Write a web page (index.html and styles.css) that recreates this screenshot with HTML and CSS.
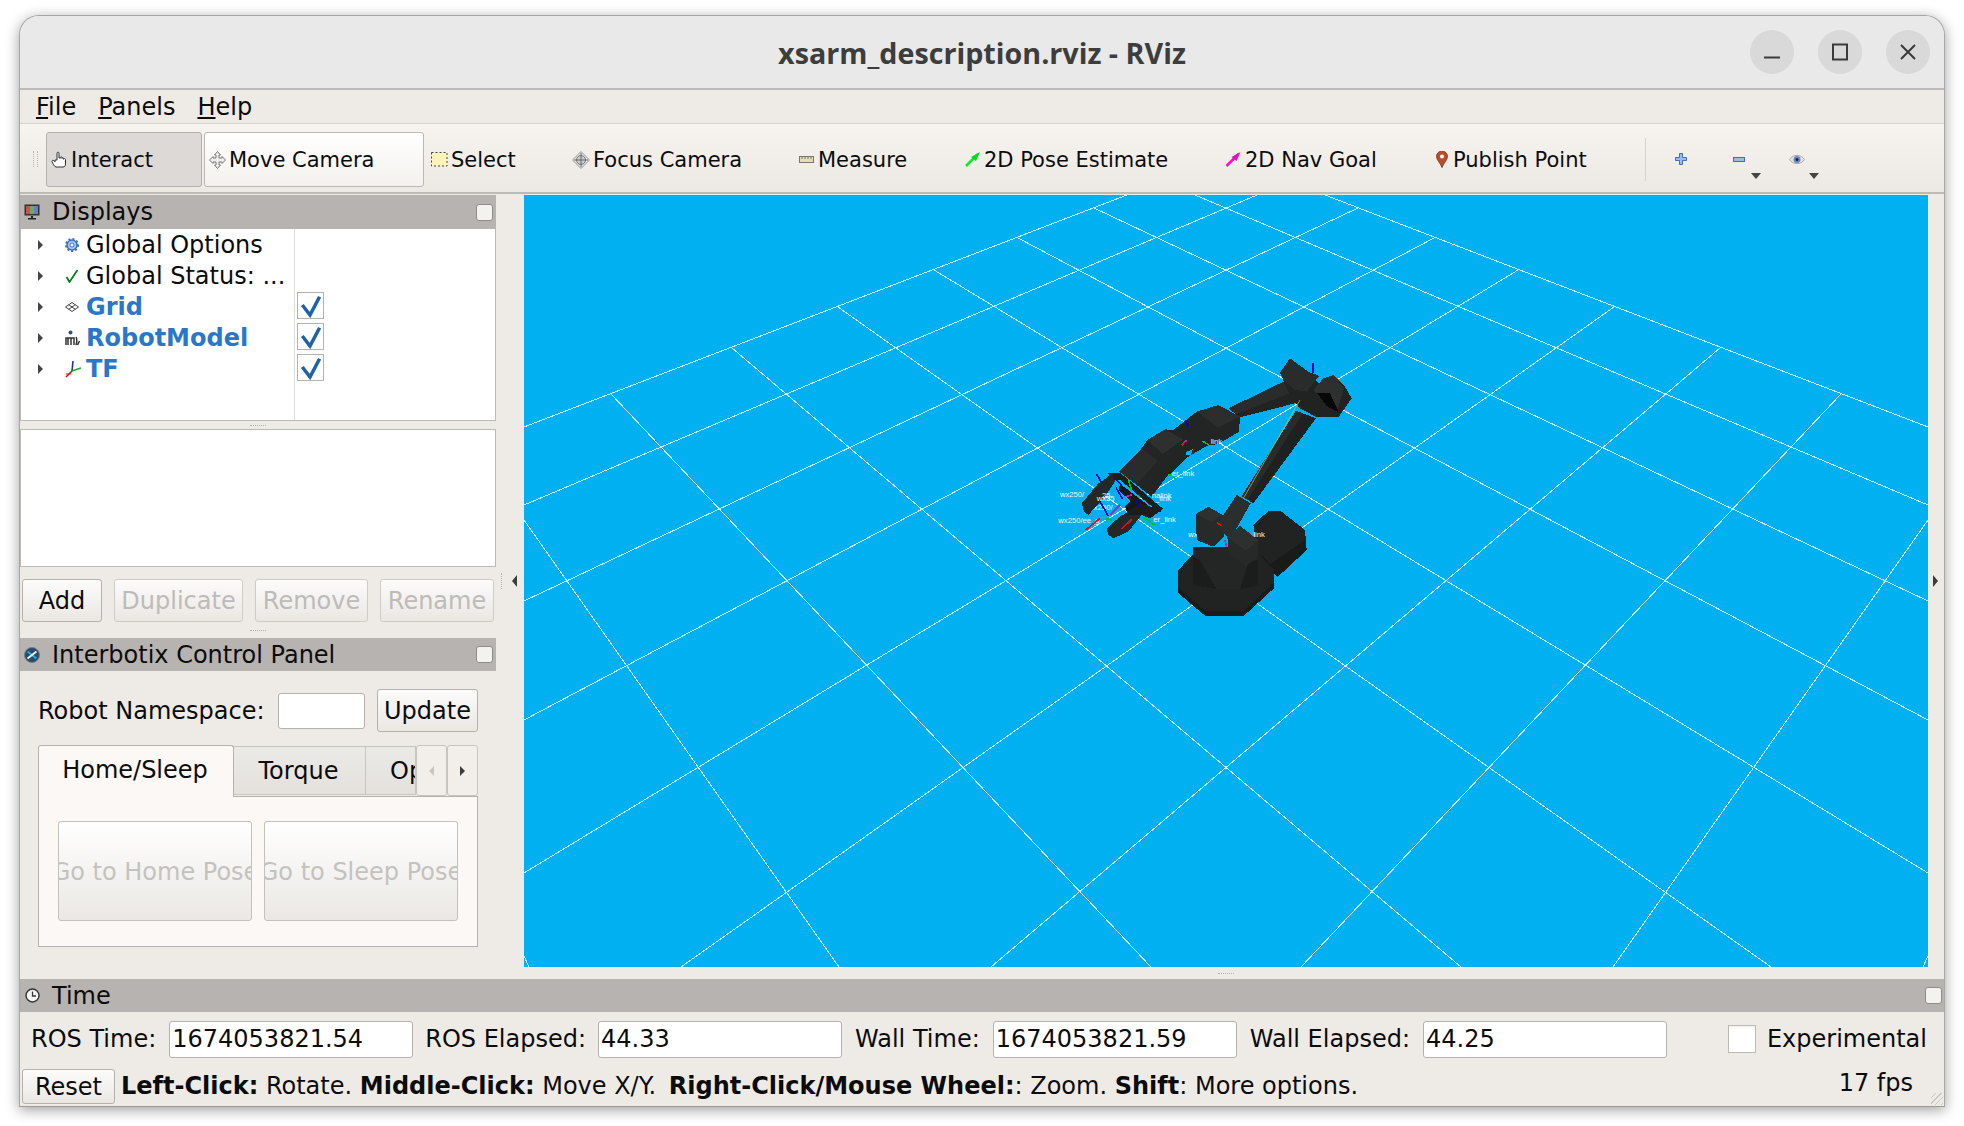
FILE: index.html
```html
<!DOCTYPE html>
<html lang="en">
<head>
<meta charset="utf-8">
<title>xsarm_description.rviz - RViz</title>
<link rel="stylesheet" href="styles.css">
</head>
<body>
<div class="window">
  <header class="titlebar">
    <span></span>
    <h1 class="title">xsarm_description.rviz - RViz</h1>
    <div class="winbtns">
      <div class="winbtn"><svg width="20" height="20" viewBox="0 0 20 20"><path d="M2 15.5H18" class="wg"/></svg></div>
      <div class="winbtn"><svg width="20" height="20" viewBox="0 0 20 20"><path d="M3 2.500H17V17.500H3Z" class="wg"/></svg></div>
      <div class="winbtn"><svg width="20" height="20" viewBox="0 0 20 20"><path d="M3 3L17 17M17 3L3 17" class="wg"/></svg></div>
    </div>
  </header>
  <nav class="menubar">
    <span><u>F</u>ile</span><span><u>P</u>anels</span><span><u>H</u>elp</span>
  </nav>
  <div class="toolbar">
    <div class="grip"></div>
    <div class="tool active">
      <svg width="17" height="17" viewBox="0 0 17 17"><path d="M6 9V2.200C6 .8 8 .8 8 2.200V7H9.500V6.500C9.500 5.500 11 5.500 11 6.500V7.500C11 6.500 12.500 6.500 12.500 7.500V8.200C12.500 7.300 14.500 7.300 14.500 8.500V13C14.500 15 13.500 16 12 16H5C3.500 16 1.500 12 1 10.500C.7 9.500 2 8.800 3 9.800L4 11V9Z" fill="#fff" stroke="#333" stroke-width="1"/></svg>
      <span>Interact</span>
    </div>
    <div class="tool raised">
      <svg width="17" height="18" viewBox="0 0 17 18"><path d="M8.500 .5L11.500 4H10V7H13V5.500L16.500 9L13 12.500V11H10V14H11.500L8.500 17.500L5.500 14H7V11H4V12.500L.5 9L4 5.500V7H7V4H5.500Z" fill="#eeeeec" stroke="#777" stroke-width="1"/></svg>
      <span>Move Camera</span>
    </div>
    <div class="tool">
      <svg width="17" height="15" viewBox="0 0 17 15"><rect x=".5" y=".5" width="15.500" height="13.500" fill="#fbf3b8" stroke="#444" stroke-dasharray="2 2"/></svg>
      <span>Select</span>
    </div>
    <div class="tool">
      <svg width="18" height="18" viewBox="0 0 18 18"><path d="M9 .5L17.500 9L9 17.500L.5 9Z" fill="#e4e4e2" stroke="#999"/><circle cx="9" cy="9" r="4.500" fill="#ccc" stroke="#777"/><path d="M9 2V16M2 9H16" stroke="#666" stroke-width="1"/></svg>
      <span>Focus Camera</span>
    </div>
    <div class="tool wide">
      <svg width="15" height="7" viewBox="0 0 15 7"><rect x=".5" y=".5" width="14" height="6" fill="#e6dcae" stroke="#777"/><path d="M3 1V3M6 1V3M9 1V3M12 1V3" stroke="#777"/></svg>
      <span>Measure</span>
    </div>
    <div class="tool wide">
      <svg width="15" height="15" viewBox="0 0 15 15"><path d="M1 14L13 2" stroke="#00ee22" stroke-width="2.500"/><path d="M15 0L11 9L6 5Z" fill="#00dd22"/></svg>
      <span>2D Pose Estimate</span>
    </div>
    <div class="tool wide">
      <svg width="16" height="15" viewBox="0 0 15 15"><path d="M1 14L13 2" stroke="#f010d8" stroke-width="2.500"/><path d="M15 0L11 9L6 5Z" fill="#e010c8"/></svg>
      <span>2D Nav Goal</span>
    </div>
    <div class="tool pin">
      <svg width="12" height="17" viewBox="0 0 12 17"><path d="M6 16.500C4.500 12 .5 9 .5 5.500A5.500 5.500 0 0 1 11.500 5.500C11.500 9 7.500 12 6 16.500Z" fill="#bf4c2a" stroke="#7a4a2a"/><circle cx="6" cy="5.500" r="2" fill="#fff"/></svg>
      <span>Publish Point</span>
    </div>
    <div class="tool-sep"></div>
    <svg class="tb-plus" width="12" height="12" viewBox="0 0 12 12"><path d="M4.500 .5H7.500V4.500H11.500V7.500H7.500V11.500H4.500V7.500H.5V4.500H4.500Z" fill="#9cbce6" stroke="#3f6fb5"/></svg>
    <svg class="tb-minus" width="12" height="5" viewBox="0 0 12 5"><rect x=".5" y=".5" width="11" height="4" fill="#9cbce6" stroke="#3f6fb5"/></svg>
    <span class="drop drop-a"></span>
    <svg class="tb-eye" width="16" height="11" viewBox="0 0 16 11"><path d="M.5 5.500C4 0 12 0 15.500 5.500C12 11 4 11 .5 5.500Z" fill="#e4e4e4" stroke="#aaa"/><circle cx="8" cy="5.500" r="3.500" fill="#6f86c4"/><circle cx="8" cy="5.500" r="1.500" fill="#1a2340"/></svg>
    <span class="drop drop-b"></span>
  </div>

  <div class="main">
    <aside class="leftdock">
      <div class="dock-title">
        <svg width="16" height="16" viewBox="0 0 16 16"><rect x=".5" y=".5" width="15" height="11" fill="#333"/><rect x="2" y="2" width="4" height="8" fill="#c2554f"/><rect x="6" y="2" width="4" height="8" fill="#6fa860"/><rect x="10" y="2" width="4" height="8" fill="#6a7fc0"/><path d="M7 12H9V14H12V15.500H4V14H7Z" fill="#222"/></svg>
        <span class="dock-name">Displays</span>
        <span class="float-box"></span>
      </div>
      <div class="tree">
        <div class="tree-row">
          <span class="twisty"></span>
          <svg class="ticon" width="14" height="14" viewBox="0 0 14 14"><circle cx="7" cy="7" r="5" fill="#a9c6ee" stroke="#3a6fc4" stroke-width="1.500"/><circle cx="7" cy="7" r="6" fill="none" stroke="#3a6fc4" stroke-width="2" stroke-dasharray="2 2"/><circle cx="7" cy="7" r="2" fill="#fff" stroke="#3a6fc4"/></svg>
          <span class="tname">Global Options</span>
        </div>
        <div class="tree-row">
          <span class="twisty"></span>
          <svg class="ticon" width="14" height="14" viewBox="0 0 14 14"><path d="M1.500 8L4.500 13L12.500 1" fill="none" stroke="#0b7a1e" stroke-width="1.800"/></svg>
          <span class="tname">Global Status: ...</span>
        </div>
        <div class="tree-row">
          <span class="twisty"></span>
          <svg class="ticon" width="14" height="10" viewBox="0 0 14 10"><path d="M7 .5L13.500 5L7 9.500L.5 5ZM3.700 2.700L10.300 7.300M10.300 2.700L3.700 7.300" fill="none" stroke="#444" stroke-width="1"/></svg>
          <span class="tname on">Grid</span>
          <span class="tcheck"><svg width="26" height="26" viewBox="0 0 26 26"><path d="M4.300 12L12 22L21.600 3.700" class="chk"/></svg></span>
        </div>
        <div class="tree-row">
          <span class="twisty"></span>
          <svg class="ticon" width="16" height="16" viewBox="0 0 16 16"><circle cx="5.500" cy="2.500" r="2" fill="#33507a"/><path d="M1 15V8H9V15M3 8V15M6 8V15M11 15C12 12 12 9 11 7M14.500 11L12.500 15" fill="none" stroke="#333" stroke-width="1.500"/></svg>
          <span class="tname on">RobotModel</span>
          <span class="tcheck"><svg width="26" height="26" viewBox="0 0 26 26"><path d="M4.300 12L12 22L21.600 3.700" class="chk"/></svg></span>
        </div>
        <div class="tree-row">
          <span class="twisty"></span>
          <svg class="ticon" width="16" height="18" viewBox="0 0 16 18"><path d="M7 11L8 1" stroke="#1a2ad0" stroke-width="1.600"/><path d="M7 11L16 8" stroke="#11aa22" stroke-width="1.400"/><path d="M7 11L1 17" stroke="#dd1111" stroke-width="1.600"/><path d="M1 14H6" stroke="#dd1111"/></svg>
          <span class="tname on">TF</span>
          <span class="tcheck"><svg width="26" height="26" viewBox="0 0 26 26"><path d="M4.300 12L12 22L21.600 3.700" class="chk"/></svg></span>
        </div>
        <div class="tree-rule"></div>
      </div>
      <div class="split-h split-tree"><i></i></div>
      <div class="desc"></div>
      <div class="btn-row">
        <button class="btn b-add">Add</button>
        <button class="btn off b-dup">Duplicate</button>
        <button class="btn off b-rem">Remove</button>
        <button class="btn off b-ren">Rename</button>
      </div>
      <div class="split-h split-panel"><i></i></div>
      <div class="dock-title short">
        <svg width="16" height="16" viewBox="0 0 16 16"><circle cx="8" cy="8" r="7.500" fill="#2c4a66" stroke="#6c7f90"/><path d="M3.500 4.500L12.500 11.500" stroke="#22a7e0" stroke-width="2"/><path d="M12.500 4.500L3.500 11.500" stroke="#e6eef4" stroke-width="2"/></svg>
        <span class="dock-name">Interbotix Control Panel</span>
        <span class="float-box"></span>
      </div>
      <div class="ns-row">
        <span class="ns-label">Robot Namespace:</span>
        <span class="field ns-field"></span>
        <button class="btn b-upd">Update</button>
      </div>
      <div class="tabs">
        <div class="tabbar">
          <div class="tab sel">Home/Sleep</div>
          <div class="tab t-torque">Torque</div>
          <div class="tab t-op">Op</div>
          <div class="tabscroll dim"><i class="arrow-l"></i></div>
          <div class="tabscroll"><i class="arrow-r"></i></div>
        </div>
        <div class="pane">
          <div class="bigbtn"><span>Go to Home Pose</span></div>
          <div class="bigbtn"><span>Go to Sleep Pose</span></div>
        </div>
      </div>
    </aside>

    <div class="strip-left"><i class="vdots"></i><i class="arrow-l dark"></i></div>

    <div class="view-col">
      <div class="viewport">
        <svg class="scene" width="1404" height="772" viewBox="524 195 1404 772">
          <g class="gridlines">
            <g id="fam">
              <path d="M524 427L1127 195"/>
              <path d="M524 505L1257 195"/>
              <path d="M524 601L1358 208"/>
              <path d="M524 720L1434 238"/>
              <path d="M524 873L1518 270"/>
              <path d="M681 967L1614 307"/>
              <path d="M991 967L1720 348"/>
              <path d="M1301 967L1841 394"/>
              <path d="M1613 967L1928 520"/>
              <path d="M1923 967L1928 956"/>
            </g>
            <use href="#fam" transform="matrix(-1 0 0 1 2452 0)"/>
          </g>
          <g transform="translate(1040 340) scale(.33333)">
            <g class="labels">
              <text x="60" y="472">wx250/</text>
              <text x="55" y="548">wx250/ee_g</text>
              <text x="145" y="510">wx250/</text>
              <text x="445" y="592">wx250/up</text>
            </g>
            <g class="robot">
              <polygon points="640,555 685,513 722,513 795,570 800,630 712,712 690,690 655,650" fill="#212222"/>
              <polygon points="660,640 690,672 795,600 800,630 712,712 690,690" fill="#191a1a"/>
              <polygon points="415,690 460,642 655,642 702,690 702,745 640,800 612,827 495,827 415,760" fill="#212222"/>
              <polygon points="415,742 495,812 612,812 702,728 702,745 612,827 495,827 415,760" fill="#191a1a"/>
              <polygon points="460,620 655,620 655,735 600,748 520,748 460,735" fill="#242525"/>
              <polygon points="480,660 530,748 460,735 460,650" fill="#1b1c1c"/>
              <polygon points="625,665 655,660 655,735 600,748" fill="#1b1c1c"/>
              <polygon points="468,522 505,500 548,525 552,590 520,620 470,600" fill="#282929"/>
              <polygon points="468,522 505,500 548,525 515,545" fill="#2f3030"/>
              <polygon points="605,468 768,212 828,235 640,490" fill="#1f2020"/>
              <polygon points="605,468 768,212 788,220 622,480" fill="#2a2b2b"/>
              <polygon points="530,555 590,465 632,490 570,600" fill="#2c2d2d"/>
              <polygon points="562,590 600,558 655,600 655,650 618,678 566,640" fill="#272828"/>
              <polygon points="562,590 600,558 655,600 618,632" fill="#2e2f2f"/>
              <polygon points="730,120 825,120 850,140 880,105 915,140 935,175 895,232 830,232 780,205 745,165" fill="#212222"/>
              <polygon points="720,98 750,55 805,95 838,108 800,155 765,150 730,120" fill="#2a2b2b"/>
              <polygon points="820,150 850,115 880,105 912,145 890,215 860,190" fill="#2e2f2f"/>
              <polygon points="832,160 870,160 897,218 860,198" fill="#080808"/>
              <polygon points="565,205 730,125 765,190 600,232" fill="#222323"/>
              <polygon points="565,205 730,125 748,160 590,222" fill="#2a2b2b"/>
              <polygon points="238,395 305,325 322,300 375,268 400,270 470,215 535,195 600,230 597,275 535,312 500,318 445,350 400,395 380,410 335,470" fill="#232424"/>
              <polygon points="470,215 535,195 600,230 535,262" fill="#2c2d2d"/>
              <polygon points="322,300 375,268 430,298 368,342" fill="#2e2f2f"/>
              <polygon points="238,395 305,325 352,362 290,435" fill="#2a2b2b"/>
              <polygon points="205,400 240,398 368,505 360,518 330,495 240,420 215,418" fill="#1c1d1d"/>
              <polygon points="240,432 262,448 330,500 300,490 262,520 255,500 272,482 236,452" fill="#161717"/>
              <polygon points="250,525 300,490 345,505 365,510 330,535 305,525" fill="#1c1d1d"/>
              <polygon points="125,490 175,430 205,410 215,400 225,425 195,470 145,525 132,515" fill="#262727"/>
              <polygon points="200,565 245,525 305,525 265,575 220,595 205,585" fill="#262727"/>
              <polygon points="440,335 458,328 452,345 438,345" fill="#00b0f0"/>
            </g>
            <path d="M780 180L612 472" class="yline"/>
            <g class="axes">
              <path d="M820 70L818 100M437 240L445 262M170 403L185 428M228 418L245 435M228 443L248 478M287 480L300 505M180 485L205 528" stroke="#0808b8"/>
              <path d="M425 316L437 303M137 570L180 535M245 567L275 538M530 547L545 557" stroke="#ee0a0a"/>
              <path d="M487 303L507 315M385 402L405 415M265 420L275 450M195 535L215 540M313 533L343 555" stroke="#12c012"/>
              <path d="M430 308L440 302M258 470L275 465M210 525L240 495M555 600L560 620" stroke="#d8189a"/>
            </g>
            <g class="labels">
              <text x="512" y="312">link</text>
              <text x="395" y="408">er_link</text>
              <text x="640" y="592">link</text>
              <text x="335" y="474">nalink</text>
              <text x="345" y="483">_link</text>
              <text x="340" y="546">er_link</text>
              <text x="186" y="474">25</text>
              <text x="170" y="482">wx25</text>
            </g>
          </g>
        </svg>
      </div>
      <div class="split-h split-view"><i></i></div>
    </div>

    <div class="strip-right"><i class="arrow-r dark"></i></div>
  </div>

  <div class="time-title">
    <svg width="15" height="15" viewBox="0 0 15 15"><circle cx="7.500" cy="7.500" r="6.500" fill="#f4f4f2" stroke="#333" stroke-width="1.400"/><path d="M7.500 3.500V8H11" fill="none" stroke="#333" stroke-width="1.300"/></svg>
    <span class="dock-name">Time</span>
    <span class="float-box"></span>
  </div>
  <div class="time-row">
    <span>ROS Time:</span><span class="field val">1674053821.54</span>
    <span class="tight">ROS Elapsed:</span><span class="field val tight">44.33</span>
    <span>Wall Time:</span><span class="field val">1674053821.59</span>
    <span>Wall Elapsed:</span><span class="field val">44.25</span>
    <span class="exp-box"></span><span class="exp-label">Experimental</span>
  </div>
  <footer class="statusbar">
    <button class="btn b-reset">Reset</button>
    <span class="hint"><b>Left-Click:</b> Rotate. <b>Middle-Click:</b> Move X/Y. <b class="spaced">Right-Click/Mouse Wheel:</b>: Zoom. <b>Shift</b>: More options.</span>
    <span class="fps">17 fps</span>
    <i class="sizegrip"></i>
  </footer>
</div>
</body>
</html>
```
FILE: styles.css
```css
* { box-sizing: border-box; }
html, body { margin: 0; padding: 0; background: #fff; }
body {
  width: 1964px;
  height: 1126px;
  padding: 15px 0 0 19px;
  overflow: hidden;
  font-family: "DejaVu Sans", sans-serif;
  font-size: 24px;
  color: #0c0c0c;
}
svg { display: block; flex: none; }
button { font: inherit; color: inherit; margin: 0; padding: 0; }
i { display: block; }

.window {
  width: 1926px;
  height: 1092px;
  display: flex;
  flex-direction: column;
  background: #eeebe7;
  border: 1px solid #a6a6a6;
  border-bottom-color: #9a9a9a;
  border-radius: 20px 20px 0 0;
  box-shadow: 0 3px 14px rgba(0, 0, 0, .38);
}

.titlebar {
  height: 74px;
  flex: none;
  display: grid;
  grid-template-columns: 1fr auto 1fr;
  align-items: center;
  background: #e9e9e9;
  border-bottom: 2px solid #bdbbb9;
  border-radius: 19px 19px 0 0;
}
.title {
  margin: 1px 0 0;
  font: 700 28.7px "Open Sans", sans-serif;
  color: #3d3d3d;
}
.winbtns {
  justify-self: end;
  display: flex;
  gap: 24px;
  padding-right: 14px;
}
.winbtn {
  width: 44px;
  height: 44px;
  border-radius: 50%;
  background: #d9d9d9;
  display: flex;
  align-items: center;
  justify-content: center;
}
.wg { fill: none; stroke: #3a3a3a; stroke-width: 2; }

.menubar {
  height: 34px;
  flex: none;
  display: flex;
  gap: 22px;
  align-items: center;
  padding: 1px 0 0 16px;
  background: #eeebe7;
  border-bottom: 1px solid #d6d2ce;
}

.toolbar {
  height: 70px;
  flex: none;
  display: grid;
  grid-template-columns: 158px 222px 141px 227px 166px 260px 210px 215px 1px 1fr;
  align-items: center;
  padding-left: 26px;
  position: relative;
  font-size: 21px;
  background: linear-gradient(#f7f4f0, #ece8e3);
  border-bottom: 2px solid #bdb9b5;
}
.grip {
  position: absolute;
  left: 13px;
  top: 27px;
  width: 5px;
  height: 16px;
  border-left: 1px dotted #b8b4b0;
  border-right: 1px dotted #b8b4b0;
}
.tool {
  height: 55px;
  margin-top: 3px;
  display: flex;
  align-items: center;
  gap: 3px;
  padding: 1px 0 0 4px;
  border: 1px solid transparent;
  border-radius: 3px;
  white-space: nowrap;
}
.tool svg { margin-top: -1px; }
.tool.wide { gap: 4px; }
.tool.pin { padding-left: 5px; gap: 5px; }
.tool.active { background: #dcd9d6; border-color: #b5b1ac; margin-right: 2px; }
.tool.raised { background: linear-gradient(#fff, #f4f1ed); border-color: #bcb8b3; margin-right: 2px; }
.tool-sep { width: 1px; height: 43px; margin-top: 3px; background: #d6d2ce; }
.tb-plus, .tb-minus, .tb-eye, .drop { position: absolute; }
.tb-plus { left: 1655px; top: 29px; }
.tb-minus { left: 1713px; top: 33px; }
.tb-eye { left: 1769px; top: 30px; }
.drop {
  top: 49px;
  width: 0;
  height: 0;
  border-left: 5px solid transparent;
  border-right: 5px solid transparent;
  border-top: 6px solid #444;
}
.drop-a { left: 1731px; }
.drop-b { left: 1789px; }

.main {
  flex: none;
  height: 785px;
  display: flex;
}
.leftdock {
  width: 476px;
  flex: none;
  display: flex;
  flex-direction: column;
  padding-top: 1px;
}
.dock-title {
  height: 34px;
  flex: none;
  display: flex;
  align-items: center;
  padding: 0 3px 0 4px;
  background: #b7b3b0;
}
.dock-title.short { height: 33px; }
.dock-name { margin-left: 12px; flex: 1; }
.float-box {
  width: 17px;
  height: 17px;
  background: #f4f2ef;
  border: 1px solid #8f8b87;
  border-radius: 3px;
}

.tree {
  height: 192px;
  flex: none;
  position: relative;
  background: #fff;
  border: 1px solid #bdb9b5;
  border-top: 0;
}
.tree-rule {
  position: absolute;
  left: 273px;
  top: 0;
  bottom: 0;
  width: 1px;
  background: #dcdad7;
}
.tree-row {
  height: 31px;
  display: flex;
  align-items: center;
  position: relative;
}
.twisty {
  width: 0;
  height: 0;
  margin-left: 17px;
  border-top: 5px solid transparent;
  border-bottom: 5px solid transparent;
  border-left: 5px solid #444;
}
.ticon { position: absolute; left: 44px; }
.tname { position: absolute; left: 65px; white-space: nowrap; }
.tname.on { color: #2a77c9; font-weight: 700; }
.tcheck {
  position: absolute;
  left: 276px;
  top: 1px;
  width: 27px;
  height: 27px;
  background: #fff;
  border: 1px solid #b5b3b0;
}
.chk { fill: none; stroke: #1f62a8; stroke-width: 3.5; }

.split-h {
  flex: none;
  display: flex;
  align-items: center;
  justify-content: center;
}
.split-h i { width: 16px; border-top: 1px dotted #b5b1ac; }
.split-tree { height: 8px; }
.split-panel { height: 16px; }
.split-view { height: 12px; }
.desc {
  height: 138px;
  flex: none;
  background: #fff;
  border: 1px solid #bdb9b5;
}
.btn-row {
  margin-top: 12px;
  flex: none;
  display: flex;
  gap: 12px;
  padding-left: 2px;
}
.btn {
  height: 43px;
  background: linear-gradient(#fdfcfb, #eae7e3);
  border: 1px solid #b5b1ac;
  border-radius: 3px;
  white-space: nowrap;
  overflow: hidden;
}
.btn.off { color: #bdbbb8; border-color: #cfccc8; }
.b-add { width: 80px; }
.b-dup { width: 129px; }
.b-rem { width: 113px; }
.b-ren { width: 114px; }

.ns-row {
  height: 74px;
  flex: none;
  display: flex;
  align-items: center;
  padding: 5px 0 0 18px;
}
.ns-label { width: 240px; white-space: nowrap; }
.field {
  background: #fff;
  border: 1px solid #b5b1ac;
  border-radius: 3px;
}
.ns-field { width: 87px; height: 36px; }
.b-upd { width: 101px; margin-left: 12px; }

.tabs {
  margin-left: 18px;
  width: 440px;
  flex: none;
}
.tabbar {
  height: 52px;
  display: flex;
  position: relative;
  z-index: 1;
}
.tab {
  height: 49px;
  margin-top: 1px;
  display: flex;
  align-items: center;
  justify-content: center;
  background: linear-gradient(#eceae6, #e4e1dd);
  border: 1px solid #c8c5c1;
  border-left: 0;
  white-space: nowrap;
  overflow: hidden;
}
.tab.sel {
  width: 196px;
  height: 52px;
  margin-top: 0;
  padding: 0 2px 4px 0;
  background: #fbf8f5;
  border: 1px solid #b5b1ac;
  border-bottom: 0;
  border-radius: 3px 3px 0 0;
}
.t-torque { width: 132px; padding-right: 2px; }
.t-op { width: 50px; justify-content: flex-start; padding-left: 24px; }
.tabscroll {
  width: 31px;
  height: 51px;
  display: flex;
  align-items: center;
  justify-content: center;
  background: #f2efeb;
  border: 1px solid #c8c5c1;
  border-radius: 3px;
}
.arrow-l, .arrow-r {
  width: 0;
  height: 0;
  border-top: 5px solid transparent;
  border-bottom: 5px solid transparent;
}
.arrow-l { border-right: 5px solid #3c3c3c; }
.arrow-r { border-left: 5px solid #3c3c3c; }
.dim .arrow-l { border-right-color: #c9c6c2; }
.arrow-l.dark, .arrow-r.dark { border-top-width: 6px; border-bottom-width: 6px; }
.pane {
  height: 151px;
  margin-top: -1px;
  display: flex;
  gap: 12px;
  padding: 24px 19px 0 19px;
  background: #fbf8f5;
  border: 1px solid #b5b1ac;
}
.bigbtn {
  width: 194px;
  height: 100px;
  display: flex;
  align-items: center;
  justify-content: center;
  padding-top: 2px;
  overflow: hidden;
  white-space: nowrap;
  color: #c4c2bf;
  background: linear-gradient(#fff, #ebe8e4);
  border: 1px solid #c4c1bd;
  border-radius: 3px;
}

.strip-left {
  width: 28px;
  flex: none;
  height: 773px;
  display: flex;
  align-items: center;
  padding-left: 5px;
  gap: 10px;
}
.vdots { height: 16px; border-left: 1px dotted #b5b1ac; }
.view-col {
  width: 1404px;
  flex: none;
  display: flex;
  flex-direction: column;
  padding-top: 1px;
}
.viewport {
  height: 772px;
  flex: none;
  background: #01b0f1;
  overflow: hidden;
}
.gridlines path { fill: none; stroke: #c9eefc; stroke-width: 1; shape-rendering: crispEdges; }
.robot polygon { shape-rendering: crispEdges; }
.axes path { fill: none; stroke-width: 5; shape-rendering: crispEdges; }
.yline { fill: none; stroke: #d6c84c; stroke-width: 2; }
.labels text { font: 23px "Liberation Sans", sans-serif; fill: #eef9fe; }
.strip-right {
  flex: 1;
  height: 773px;
  display: flex;
  align-items: center;
  padding-left: 5px;
}

.time-title {
  height: 33px;
  flex: none;
  display: flex;
  align-items: center;
  padding: 0 2px 0 5px;
  background: #b7b3b0;
}
.time-row {
  height: 52px;
  flex: none;
  display: flex;
  align-items: center;
  gap: 13px;
  padding: 2px 17px 0 11px;
  white-space: nowrap;
}
.time-row .tight { margin-left: -1px; }
.val {
  width: 244px;
  height: 37px;
  display: flex;
  align-items: center;
  padding-left: 2px;
}
.exp-box {
  width: 28px;
  height: 28px;
  margin-left: auto;
  background: linear-gradient(#f4f2ef, #fff 12%);
  border: 1px solid #bdb9b5;
}
.exp-label { margin-left: -2px; }

.statusbar {
  flex: 1;
  display: flex;
  align-items: flex-start;
  padding: 5px 0 0 2px;
  position: relative;
  white-space: nowrap;
}
.b-reset { width: 93px; height: 35px; }
.hint { margin-left: 6px; line-height: 35px; }
.spaced { margin-left: 5px; }
.fps { position: absolute; right: 31px; top: 0; line-height: 30px; padding-top: 4px; }
.sizegrip {
  position: absolute;
  right: 1px;
  bottom: 1px;
  width: 12px;
  height: 12px;
  background: repeating-linear-gradient(135deg, transparent 0 3px, #c9c6c2 3px 4px);
}
```
